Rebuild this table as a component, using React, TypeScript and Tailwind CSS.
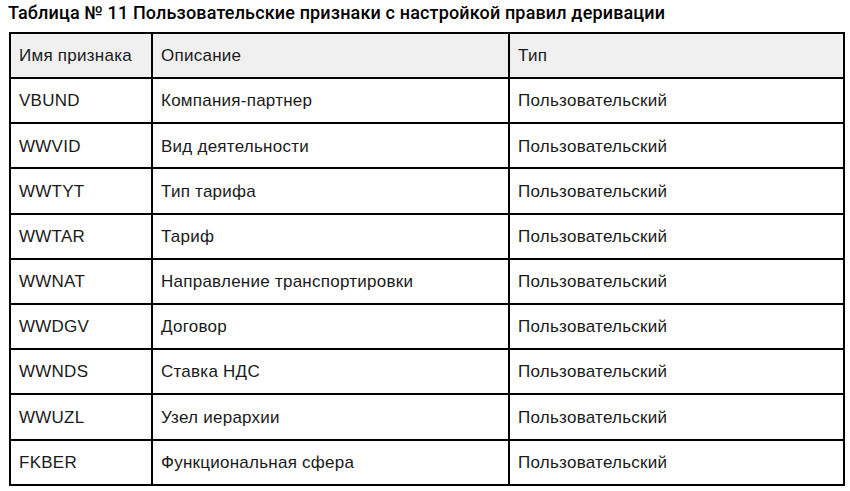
const rows: [string, string][] = [
  ["VBUND", "Компания-партнер"],
  ["WWVID", "Вид деятельности"],
  ["WWTYT", "Тип тарифа"],
  ["WWTAR", "Тариф"],
  ["WWNAT", "Направление транспортировки"],
  ["WWDGV", "Договор"],
  ["WWNDS", "Ставка НДС"],
  ["WWUZL", "Узел иерархии"],
  ["FKBER", "Функциональная сфера"],
];

export default function App() {
  return (
    <div className="h-[491px] w-[850px] bg-white font-['Liberation_Sans',Arial,sans-serif] text-[#1a1a1a]">
      <div className="pl-[8px] pt-[2px] font-['Roboto',sans-serif] text-[18px] leading-[21px] font-medium tracking-[0.15px] text-black">
        Таблица № 11 Пользовательские признаки с настройкой правил деривации
      </div>
      <table className="ml-[9px] mt-[9px] w-[834px] table-fixed border-collapse text-[17px] tracking-[0.25px]">
        <colgroup>
          <col className="w-[142px]" />
          <col className="w-[357px]" />
          <col className="w-[335px]" />
        </colgroup>
        <thead>
          <tr className="h-[45px] bg-[#f0f0f0]">
            <th className="border-2 border-black px-[8px] pt-[1px] text-left font-normal">Имя признака</th>
            <th className="border-2 border-black px-[8px] pt-[1px] text-left font-normal">Описание</th>
            <th className="border-2 border-black px-[8px] pt-[1px] text-left font-normal">Тип</th>
          </tr>
        </thead>
        <tbody>
          {rows.map(([name, desc]) => (
            <tr key={name} className="h-[45.2px]">
              <td className="border-2 border-black px-[8px] pt-[1px]">{name}</td>
              <td className="border-2 border-black px-[8px] pt-[1px]">{desc}</td>
              <td className="border-2 border-black px-[8px] pt-[1px]">Пользовательский</td>
            </tr>
          ))}
        </tbody>
      </table>
    </div>
  );
}
